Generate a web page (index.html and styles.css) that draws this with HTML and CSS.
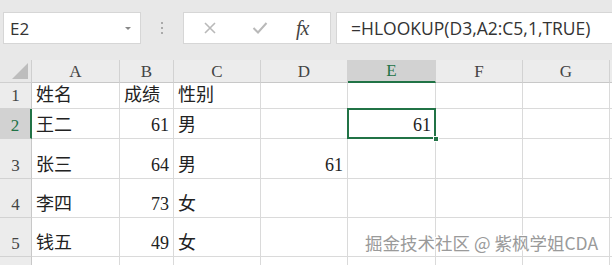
FILE: index.html
```html
<!DOCTYPE html>
<html lang="zh-CN">
<head>
  <meta charset="UTF-8">
  <title>HLOOKUP</title>
  <link rel="stylesheet" href="styles.css">
</head>
<body>
  <div class="toolbar">
    <div class="name-box">
      <span>E2</span>
      <span class="drop"></span>
    </div>
    <div class="grip"><i></i><i></i><i></i></div>
    <div class="buttons">
      <svg class="btn-x" width="14" height="14" viewBox="0 0 14 14">
        <path d="M2 2 L12 12 M12 2 L2 12" stroke="#b9b9b9" stroke-width="1.6" fill="none"/>
      </svg>
      <svg class="btn-ok" width="16" height="14" viewBox="0 0 16 14">
        <path d="M1.5 7 L6 11.5 L14.5 2" stroke="#b9b9b9" stroke-width="2" fill="none"/>
      </svg>
      <span class="fx">fx</span>
    </div>
    <div class="formula">=HLOOKUP(D3,A2:C5,1,TRUE)</div>
  </div>

  <div class="sheet">
    <div class="corner"><span class="tri"></span></div>
    <div class="col-head">A</div>
    <div class="col-head">B</div>
    <div class="col-head">C</div>
    <div class="col-head">D</div>
    <div class="col-head active">E</div>
    <div class="col-head">F</div>
    <div class="col-head">G</div>
    <div class="col-head"></div>

    <div class="row-head">1</div>
    <div class="cell">姓名</div>
    <div class="cell">成绩</div>
    <div class="cell">性别</div>
    <div class="cell"></div>
    <div class="cell"></div>
    <div class="cell"></div>
    <div class="cell"></div>
    <div class="cell"></div>

    <div class="row-head active">2</div>
    <div class="cell">王二</div>
    <div class="cell num">61</div>
    <div class="cell">男</div>
    <div class="cell"></div>
    <div class="cell num selected">61<span class="handle"></span></div>
    <div class="cell"></div>
    <div class="cell"></div>
    <div class="cell"></div>

    <div class="row-head">3</div>
    <div class="cell">张三</div>
    <div class="cell num">64</div>
    <div class="cell">男</div>
    <div class="cell num">61</div>
    <div class="cell"></div>
    <div class="cell"></div>
    <div class="cell"></div>
    <div class="cell"></div>

    <div class="row-head">4</div>
    <div class="cell">李四</div>
    <div class="cell num">73</div>
    <div class="cell">女</div>
    <div class="cell"></div>
    <div class="cell"></div>
    <div class="cell"></div>
    <div class="cell"></div>
    <div class="cell"></div>

    <div class="row-head">5</div>
    <div class="cell">钱五</div>
    <div class="cell num">49</div>
    <div class="cell">女</div>
    <div class="cell"></div>
    <div class="cell"></div>
    <div class="cell"></div>
    <div class="cell"></div>
    <div class="cell"></div>

    <div class="row-head"></div>
    <div class="cell"></div>
    <div class="cell"></div>
    <div class="cell"></div>
    <div class="cell"></div>
    <div class="cell"></div>
    <div class="cell"></div>
    <div class="cell"></div>
    <div class="cell"></div>

    <div class="watermark">掘金技术社区 @ 紫枫学姐CDA</div>
  </div>
</body>
</html>
```

FILE: styles.css
```css
* {
  margin: 0;
  padding: 0;
  box-sizing: border-box;
}

html, body {
  width: 612px;
  height: 265px;
  overflow: hidden;
  background: #fff;
  font-family: "Liberation Serif", "Noto Sans CJK SC", serif;
  color: #222;
}

.toolbar {
  height: 60px;
  background: #e8e8e8;
  display: flex;
  align-items: flex-start;
  padding-top: 12px;
}

.name-box {
  width: 138px;
  height: 32px;
  margin-left: 3px;
  background: #fff;
  border: 1px solid #d6d6d6;
  display: flex;
  align-items: center;
  justify-content: space-between;
  padding: 0 9px 0 6px;
  font-family: "Open Sans", "Liberation Sans", sans-serif;
  font-size: 17px;
  color: #333;
}

.drop {
  width: 0;
  height: 0;
  border-left: 3px solid transparent;
  border-right: 3px solid transparent;
  border-top: 3px solid #888;
}

.grip {
  width: 42px;
  height: 32px;
  display: flex;
  flex-direction: column;
  align-items: center;
  justify-content: center;
  gap: 3px;
}

.grip i {
  display: block;
  width: 2px;
  height: 2px;
  background: #aaa;
}

.buttons {
  width: 148px;
  height: 32px;
  background: #fff;
  border: 1px solid #d6d6d6;
  display: flex;
  align-items: center;
  padding-left: 19px;
}

.btn-x {
  margin-right: 35px;
}

.btn-ok {
  margin-right: 28px;
}

.fx {
  font-family: "Liberation Serif", serif;
  font-style: italic;
  font-size: 20px;
  color: #444;
  letter-spacing: -1px;
}

.formula {
  flex: 1;
  height: 32px;
  margin-left: 5px;
  background: #fff;
  border: 1px solid #d6d6d6;
  border-right: none;
  display: flex;
  align-items: center;
  padding-left: 14px;
  font-family: "Open Sans", "Liberation Sans", sans-serif;
  font-size: 17.5px;
  color: #333;
}

.sheet {
  position: relative;
  display: grid;
  grid-template-columns: 32px 88px 54px 87px 87px 88px 87px 87px 20px;
  grid-template-rows: 23px 26px 30px 40px 39px 39px 20px;
  font-size: 18px;
}

.corner {
  background: #e8e8e8;
  border-right: 1px solid #cfcfcf;
  border-bottom: 1px solid #cfcfcf;
  position: relative;
}

.tri {
  position: absolute;
  right: 3px;
  bottom: 3px;
  width: 0;
  height: 0;
  border-left: 16px solid transparent;
  border-bottom: 16px solid #bdbdbd;
}

.col-head {
  background: #ececec;
  border-right: 1px solid #d2d2d2;
  border-bottom: 1px solid #c8c8c8;
  display: flex;
  align-items: center;
  justify-content: center;
  color: #444;
  font-size: 17px;
  padding-top: 1px;
}

.col-head.active {
  background: #d2d2d2;
  border-bottom: 2px solid #217346;
  color: #217346;
}

.row-head {
  background: #ececec;
  border-right: 1px solid #c8c8c8;
  border-bottom: 1px solid #d2d2d2;
  display: flex;
  align-items: flex-end;
  justify-content: center;
  padding-bottom: 2px;
  color: #444;
  font-size: 17px;
}

.row-head.active {
  background: #d2d2d2;
  border-right: 2px solid #217346;
  color: #217346;
}

.cell {
  border-right: 1px solid #dadada;
  border-bottom: 1px solid #dadada;
  display: flex;
  align-items: flex-end;
  padding: 0 4px 2px 4px;
  white-space: nowrap;
  position: relative;
}

.num {
  justify-content: flex-end;
}

.selected::after {
  content: "";
  position: absolute;
  left: -1px;
  top: -1px;
  right: -1px;
  bottom: -1px;
  border: 2px solid #217346;
}

.handle {
  position: absolute;
  right: -4px;
  bottom: -4px;
  width: 6px;
  height: 6px;
  background: #217346;
  border: 1px solid #fff;
  z-index: 2;
}

.watermark {
  position: absolute;
  left: 365px;
  top: 170px;
  font-family: "Noto Sans CJK SC", sans-serif;
  font-size: 17.5px;
  color: #9a9a9a;
  text-shadow: 0 0 1px #fff, 1px 1px 0 #fff, -1px -1px 0 #fff;
  white-space: nowrap;
}
```
